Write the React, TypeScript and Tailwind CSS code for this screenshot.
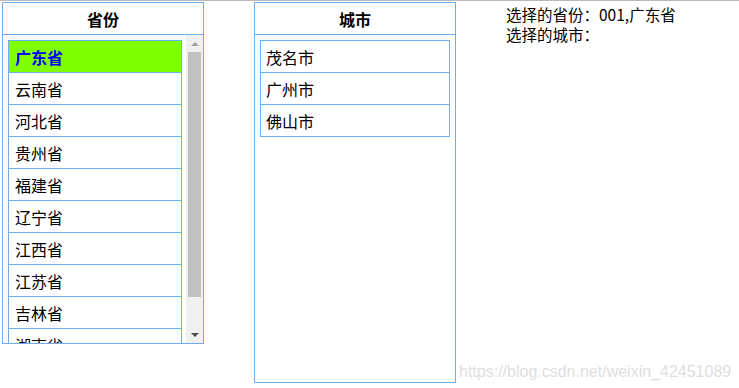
import React, { useState } from 'react';

const provinces = [
  { id: '001', name: '广东省' },
  { id: '002', name: '云南省' },
  { id: '003', name: '河北省' },
  { id: '004', name: '贵州省' },
  { id: '005', name: '福建省' },
  { id: '006', name: '辽宁省' },
  { id: '007', name: '江西省' },
  { id: '008', name: '江苏省' },
  { id: '009', name: '吉林省' },
  { id: '010', name: '湖南省' },
];

const cities: Record<string, string[]> = {
  '001': ['茂名市', '广州市', '佛山市'],
};

const font = { fontFamily: '"Microsoft YaHei", "Noto Sans CJK SC", sans-serif' };

const App: React.FC = () => {
  const [selected, setSelected] = useState('001');
  const province = provinces.find((p) => p.id === selected);
  const cityList = cities[selected] || [];

  return (
    <div className="relative h-[388px] w-[739px] overflow-hidden bg-white text-black" style={font}>
      <div className="h-px w-full bg-[#b9b9b9]" />
      <div className="mt-px flex items-start pl-[2px]">
        {/* 省份 */}
        <div className="flex h-[342px] w-[202px] flex-col border border-[#6ab0f0]">
          <div className="flex h-[32px] shrink-0 items-center justify-center border-b border-[#6ab0f0] text-[16px] font-bold">
            省份
          </div>
          <div className="flex h-[308px] overflow-hidden">
            <div className="pl-[5px] pt-[5px]">
              <ul className="w-[174px] border-x border-t border-[#6ab0f0]">
                {provinces.map((p) => (
                  <li
                    key={p.id}
                    onClick={() => setSelected(p.id)}
                    className={`flex h-[32px] items-center border-b border-[#6ab0f0] pl-[6px] text-[16px] ${
                      p.id === selected ? 'bg-[#80ff00] font-bold text-[#0000ff]' : ''
                    }`}
                  >
                    {p.name}
                  </li>
                ))}
              </ul>
            </div>
            <div className="ml-[4px] flex w-[17px] flex-col items-center bg-[#f0f0f0]">
              <div className="flex h-[17px] w-full items-center justify-center">
                <div className="h-0 w-0 border-x-[4px] border-b-[4px] border-x-transparent border-b-[#a3a3a3]" />
              </div>
              <div className="h-[245px] w-[13px] bg-[#c1c1c1]" />
              <div className="flex-1" />
              <div className="flex h-[17px] w-full items-center justify-center">
                <div className="h-0 w-0 border-x-[4px] border-t-[4px] border-x-transparent border-t-[#505050]" />
              </div>
            </div>
          </div>
        </div>

        {/* 城市 */}
        <div className="ml-[50px] flex h-[381px] w-[202px] flex-col border border-[#6ab0f0]">
          <div className="flex h-[32px] shrink-0 items-center justify-center border-b border-[#6ab0f0] text-[16px] font-bold">
            城市
          </div>
          <div className="px-[5px] pt-[5px]">
            <ul className="border-x border-t border-[#6ab0f0]">
              {cityList.map((c) => (
                <li key={c} className="flex h-[32px] items-center border-b border-[#6ab0f0] pl-[5px] text-[16px]">
                  {c}
                </li>
              ))}
            </ul>
          </div>
        </div>

        <div className="ml-[50px] pt-[2px] text-[15.5px] leading-[20px]">
          <div>选择的省份：{province ? `${province.id},${province.name}` : ''}</div>
          <div>选择的城市：</div>
        </div>
      </div>

      <div
        className="absolute left-[459px] top-[360px] text-[16px] text-[#dedede]"
        style={{ fontFamily: '"Liberation Sans", Arial, sans-serif' }}
      >
        https://blog.csdn.net/weixin_42451089
      </div>
    </div>
  );
};

export default App;
